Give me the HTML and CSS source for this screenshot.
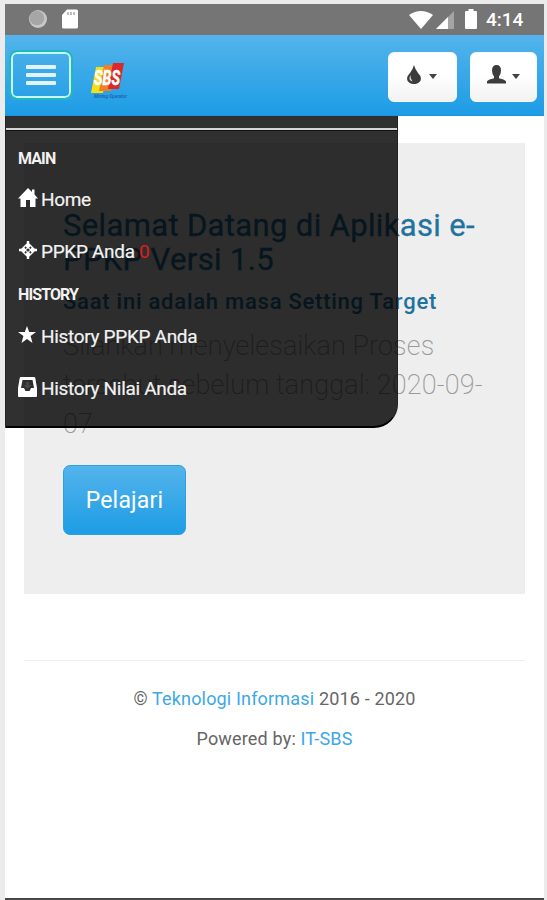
FILE: index.html
```html
<!DOCTYPE html>
<html lang="id">
<head>
<meta charset="utf-8">
<title>e-PPKP</title>
<link rel="stylesheet" href="styles.css">
</head>
<body>
<div class="phone">
  <div class="status">
    <svg class="sync" width="20" height="20" viewBox="0 0 20 20"><circle cx="10" cy="10" r="9" fill="#c8c8c8"/><circle cx="9" cy="9" r="7.3" fill="#a6a6a6"/></svg>
    <svg class="card" width="16" height="20" viewBox="0 0 16 20"><path d="M5 .5h9.500q1.500 0 1.500 1.500v16q0 1.500-1.500 1.500h-13Q0 19.500 0 18V6z" fill="#fff"/><path d="M6 3v3M9 3v3M12 3v3" stroke="#aaa" stroke-width="1.500"/></svg>
    <span class="spacer"></span>
    <svg width="24" height="18" viewBox="0 0 24 18"><path d="M0 4Q12-4 24 4L12 18z" fill="#fff"/></svg>
    <svg class="signal" width="19" height="18" viewBox="0 0 19 18"><path d="M18 0v18H0z" fill="#a4a4a4"/><path d="M12 6v12H0z" fill="#fff"/></svg>
    <svg class="battery" width="12" height="20" viewBox="0 0 12 20"><path d="M3.500 0h5v2H11q1 0 1 1v16q0 1-1 1H1q-1 0-1-1V3q0-1 1-1h2.500z" fill="#fff"/></svg>
    <span class="clock">4:14</span>
  </div>
  <header class="navbar">
    <button class="toggle" aria-label="Menu"><i></i><i></i><i></i></button>
    <svg class="logo" width="42" height="44" viewBox="0 0 42 44">
      <path d="M6 5h12l-5 26H1z" fill="#f5df18"/><path d="M14 3h12l-5 26H9z" fill="#f08028"/><path d="M23 1h11l-5 26H18z" fill="#db2929"/>
      <text class="brand" x="4" y="23" textLength="26" lengthAdjust="spacingAndGlyphs">SBS</text>
      <text class="tagline" x="4" y="36" textLength="33" lengthAdjust="spacingAndGlyphs">Mining Operator</text>
    </svg>
    <span class="spacer"></span>
    <button class="tool" aria-label="Theme">
      <svg width="14" height="19" viewBox="0 0 14 19"><path d="M7 0Q8 4 11 8q3 3 3 5.500A6.500 5.500 0 0 1 7 19a6.500 5.500 0 0 1-7-5.500Q0 11 3 8 6 4 7 0z" fill="#3c3c3c"/><path d="M3.500 10q-3 5 2 6.500Q3 13 3.500 10z" fill="#ddd"/></svg>
      <b class="caret"></b>
    </button>
    <button class="tool user" aria-label="User">
      <svg width="19" height="19" viewBox="0 0 19 19"><path d="M9.500 0Q14 0 14 5.500 14 9 12 11.500v1.800q5.500 1.200 7 3V18.500H0v-2.200q1.500-1.800 7-3v-1.800Q5 9 5 5.500 5 0 9.500 0z" fill="#3c3c3c"/></svg>
      <b class="caret"></b>
    </button>
  </header>
  <main>
    <section class="hero">
      <h1>Selamat Datang di Aplikasi e-<br>PPKP Versi 1.5</h1>
      <h2>Saat ini adalah masa Setting Target</h2>
      <p>Silahkan menyelesaikan Proses<br>tersebut sebelum tanggal: 2020-09-<br>07</p>
      <a class="learn">Pelajari</a>
    </section>
    <hr>
    <footer>
      <p>© <a>Teknologi Informasi</a> 2016 - 2020</p>
      <p class="powered">Powered by: <a>IT-SBS</a></p>
    </footer>
  </main>
  <nav class="menu">
    <div class="heading main">MAIN</div>
    <a class="item"><svg width="20" height="19" viewBox="0 0 20 19"><path d="M10 0l4 4V1.500h2.500v5L20 10.500h-2.500V19H12v-7H8v7H2.500v-8.500H0z" fill="#fff"/></svg><span>Home</span></a>
    <a class="item"><svg width="20" height="20" viewBox="0 0 20 20"><path fill="#fff" d="M8.800 1h2.400v2.200l5.600 5.600H19v2.400h-2.200l-5.600 5.600V19H8.800v-2.200l-5.600-5.600H1V8.800h2.200l5.600-5.600z"/><circle cx="10" cy="10" r="1.600" fill="#333"/><path d="M7 7l1.300 1.300M13 7l-1.300 1.300M7 13l1.300-1.300M13 13l-1.300-1.300" stroke="#333" stroke-width="1.800"/></svg><span>PPKP Anda <em>0</em></span></a>
    <div class="heading history">HISTORY</div>
    <a class="item"><svg width="20" height="20" viewBox="0 0 20 20"><path d="M9 1l2.200 6H18l-5.400 4.100L14.500 18 9 13.900 3.500 18l1.900-6.900L0 7h6.800z" fill="#fff"/></svg><span>History PPKP Anda</span></a>
    <a class="item"><svg width="20" height="20" viewBox="0 0 20 20"><path fill="#fff" fill-rule="evenodd" d="M3 0h13q1 0 1.300 1L19 11v8q0 1-1 1H1q-1 0-1-1v-8L1.700 1Q2 0 3 0zM4.500 3L3 11h3l1.500 3h4L13 11h3l-1.500-8z"/><path d="M8 5h3v3h2.500l-4 4-4-4H8z" fill="#fff" opacity=".12"/></svg><span>History Nilai Anda</span></a>
  </nav>
</div>
</body>
</html>
```
FILE: styles.css
```css
* { box-sizing: border-box; }
body { margin: 0; height: 900px; padding: 4px 3px 0 5px; background: #ebebeb; font-family: Roboto, sans-serif; overflow: hidden; }
.phone { position: relative; height: 896px; background: #fff; border-bottom: 2px solid #484848; }
.status { height: 31px; background: #757575; display: flex; align-items: center; padding: 0 21px 0 23px; }
.sync, .card { margin-top: -2px; }
.card { margin-left: 14px; }
.spacer { flex: 1; }
.signal { margin-left: 3px; }
.battery { margin-left: 10px; margin-top: -2px; }
.clock { margin-left: 9px; width: 37px; color: #fff; font-size: 19px; font-weight: 500; white-space: nowrap; }
.navbar { height: 81px; display: flex; padding: 17px 7px 0 6px; background: linear-gradient(#54b4eb, #1d9ce5); border-bottom: 1px solid #1995dc; }
button { font: inherit; padding: 0; }
.toggle { width: 60px; height: 46px; border: 2px solid #c8f5f4; border-radius: 6px; outline: 2px solid #20b9bb; background: transparent; display: flex; flex-direction: column; align-items: center; justify-content: center; gap: 4px; }
.toggle i { width: 30px; height: 4px; border-radius: 1px; background: #e2f3ff; }
.logo { margin: 10px 0 0 19px; }
.brand { font: italic 700 21px Roboto, sans-serif; fill: #fff; stroke: #fff; stroke-width: .6px; }
.tagline { font: italic 500 6px Roboto, sans-serif; fill: #1560ac; }
.tool { width: 69px; height: 50px; border: 1px solid #f4f8fb; border-radius: 6px; background: linear-gradient(#fff 45%, #f2f2f2); display: flex; align-items: center; justify-content: center; gap: 8px; padding: 0 1px 6px 0; }
.tool.user { width: 67px; margin-left: 13px; gap: 6px; }
.caret { border: 4px solid transparent; border-top: 5px solid #444; border-bottom: 0; margin-top: 4px; }
main { padding: 27px 19px 0; }
.hero { height: 451px; background: #eee; padding: 65px 0 0 39px; white-space: nowrap; }
h1, h2, p { margin: 0; }
h1 { padding-top: 1px; font-size: 31px; font-weight: 400; line-height: 34px; color: #22729f; -webkit-text-stroke: .3px #22729f; letter-spacing: .35px; }
h2 { margin-top: 12px; font-size: 22px; font-weight: 500; line-height: 26px; color: #22729f; letter-spacing: .75px; }
.hero p { margin-top: 12px; font-size: 27px; line-height: 39px; font-weight: 200; color: #999; letter-spacing: .15px; }
.learn { display: flex; align-items: center; justify-content: center; margin-top: 21px; width: 123px; height: 70px; border-radius: 7px; background: linear-gradient(#54b4eb, #1d9ce5); color: #fff; font-size: 23px; letter-spacing: .2px; border: 1px solid #2ba0e2; }
hr { margin: 66px 0 0; border: 0; border-top: 1px solid #eee; }
footer { padding-top: 27px; text-align: center; color: #666; font-size: 18px; line-height: 21px; letter-spacing: .17px; }
footer a { color: #3da7e8; }
.powered { margin-top: 19px; }
.menu { position: absolute; left: 0; top: 112px; width: 393px; height: 312px; padding-left: 13px; background: rgba(0, 0, 0, .81); border: 1px solid #222; border-top: 0; border-bottom: 2px solid #000; border-radius: 0 0 24px 0; color: #f2f2f2; }
.menu::before { content: ""; display: block; height: 2px; margin: 12px 0 0 -13px; background: #d5d5d5; border-bottom: 1px solid #111; }
.heading { margin-left: -1px; font-size: 16px; font-weight: 700; line-height: 20px; letter-spacing: -.9px; }
.main { margin-top: 18px; margin-bottom: 7px; }
.item { height: 52px; display: flex; align-items: center; gap: 3px; font-size: 19px; letter-spacing: -.32px; white-space: nowrap; padding-bottom: 6px; -webkit-text-stroke: .2px; }
.item svg { flex: none; margin-left: -1px; margin-top: -3px; }
.history { margin: 5px 0 8px -1px; }
em { color: #d31e22; font-style: normal; }
```
